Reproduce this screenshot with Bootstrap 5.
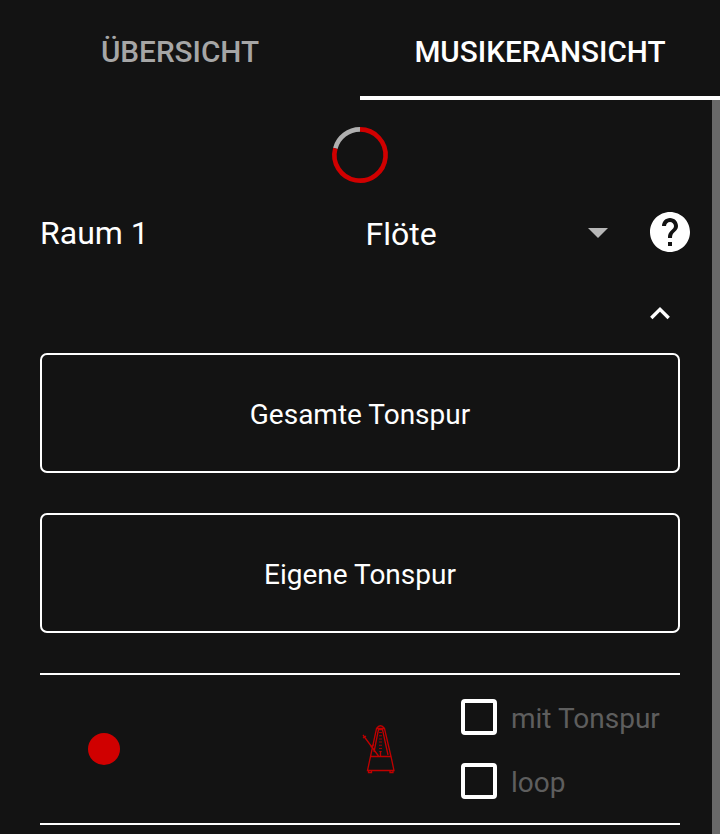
<!DOCTYPE html>
<html lang="de">
<head>
<meta charset="utf-8">
<meta name="viewport" content="width=device-width, initial-scale=1">
<title>Musikeransicht</title>
<link rel="stylesheet" href="https://cdn.jsdelivr.net/npm/bootstrap@5.3.0/dist/css/bootstrap.min.css">
<style>
html, body { height: 834px; overflow: hidden; }
body { background: #131313; color: #fff; font-family: Roboto, "Noto Sans", sans-serif; font-size: 28px; line-height: 40px; }
.tabs { height: 100px; }
.tab-link { background: none; border: 0; border-bottom: 4px solid transparent; border-radius: 0; color: #a6a6a6; font-size: 29.7px; font-weight: 500; line-height: 40px; padding: 8px 0 0; }
.tab-link.active { color: #fff; border-color: #fff; }
.pane { height: 734px; }
.content { width: 712px; padding: 0 32px 0 40px; }
.scroll-thumb { width: 8px; background: #686868; }
.progress-row { height: 108px; padding-top: 24px; width: 640px; }
.room-row { height: 48px; width: 650px; font-size: 32px; }
.room-name { width: 326px; padding-top: 2px; }
.instrument { width: 242px; padding-top: 2px; }
.instrument span { margin-left: -.5px; padding-top: 1px; }
.collapse-row { height: 97px; padding-top: 49px; }
.track-btn { height: 120px; border: 2px solid #fff; border-radius: 7px; color: #fff; font-size: 28px; padding: 4px 0 0; }
.track-btn:hover { color: #fff; border-color: #fff; }
.track-btn + .track-btn, .controls { margin-top: 40px; }
.controls { height: 152px; border-top: 2px solid #fff; border-bottom: 2px solid #fff; }
.record { width: 32px; height: 32px; background: #d00000; margin: 0 0 1px 48px; }
.metronome { margin-left: 242px; }
.options { margin-left: 64.5px; padding-top: 22px; }
.option { height: 40px; color: #5e5e5e; }
.option span { padding-top: 3px; }
.option .form-check-input { width: 36px; height: 36px; border: 4px solid #fff; border-radius: 4px; background-color: transparent; margin: 0 14.5px 0 0; }
svg { display: block; }
</style>
</head>
<body>
<nav class="tabs nav nav-fill flex-nowrap">
  <button class="tab-link col-6" type="button">ÜBERSICHT</button>
  <button class="tab-link col-6 active" type="button">MUSIKERANSICHT</button>
</nav>
<main class="pane d-flex">
  <div class="content">
    <div class="progress-row d-flex justify-content-center">
      <svg width="62" height="62" viewBox="0 0 62 62" fill="none" stroke-width="4.6">
        <path d="M31 5.4A25.6 25.6 0 0 0 6.3 24.3" stroke="#b0b0b0"/>
        <path d="M31 5.4A25.6 25.6 0 1 1 6.3 24.3" stroke="#d00000"/>
      </svg>
    </div>
    <div class="room-row d-flex align-items-center">
      <div class="room-name">Raum 1</div>
      <div class="instrument d-flex align-items-center justify-content-between">
        <span>Flöte</span>
        <svg width="20" height="10" viewBox="0 0 20 10"><path d="M0 0H20L10 10Z" fill="#b7b7b7"/></svg>
      </div>
      <svg class="ms-auto" width="40" height="40" viewBox="2 2 20 20"><path fill="#fff" d="M12 2C6.480 2 2 6.480 2 12s4.480 10 10 10 10-4.480 10-10S17.520 2 12 2zm1 17h-2v-2h2v2zm2.070-7.750l-.9.920C13.450 12.900 13 13.500 13 15h-2v-.5c0-1.100.450-2.100 1.170-2.830l1.240-1.260c.370-.360.590-.860.590-1.410 0-1.100-.9-2-2-2s-2 .9-2 2H8c0-2.210 1.790-4 4-4s4 1.790 4 4c0 .880-.360 1.680-.930 2.250z"/></svg>
    </div>
    <div class="collapse-row d-flex justify-content-end">
      <svg width="40" height="16" viewBox="0 0 40 16" fill="none" stroke="#fff" stroke-width="3.4"><path d="M11.3 13L20 4.3 28.7 13"/></svg>
    </div>
    <div class="d-grid">
      <button class="btn track-btn" type="button">Gesamte Tonspur</button>
      <button class="btn track-btn" type="button">Eigene Tonspur</button>
    </div>
    <div class="controls d-flex">
      <div class="record rounded-circle align-self-center"></div>
      <svg class="metronome align-self-center" width="34" height="50" viewBox="0 0 34 50" fill="none" stroke="#c00000" stroke-width="1.3">
        <path d="M5.500 46.500L8.500 32.500 14.500 4.500Q18.500-1 22.500 4.500L29 32.500 32 46.500ZM8.500 32.500H29M12 28L16.500 5.500H20.500L26 31M14.500 4.500H22.500"/>
        <path d="M18.500 8V28" stroke-width="3" stroke-dasharray="1 2.200" opacity=".8"/>
        <path d="M1 11L16.500 32M1 14L4 12M8.500 23L12 20.500M18.500 27V32"/>
        <path d="M6.500 46.500V48.500H9.500V46.500M28 46.500V48.500H31V46.500"/>
      </svg>
      <div class="options d-flex flex-column gap-4">
        <label class="option d-flex align-items-center"><input class="form-check-input" type="checkbox"><span>mit Tonspur</span></label>
        <label class="option d-flex align-items-center"><input class="form-check-input" type="checkbox"><span>loop</span></label>
      </div>
    </div>
  </div>
  <div class="scroll-thumb"></div>
</main>
<script src="https://cdn.jsdelivr.net/npm/bootstrap@5.3.0/dist/js/bootstrap.bundle.min.js"></script>
</body>
</html>
